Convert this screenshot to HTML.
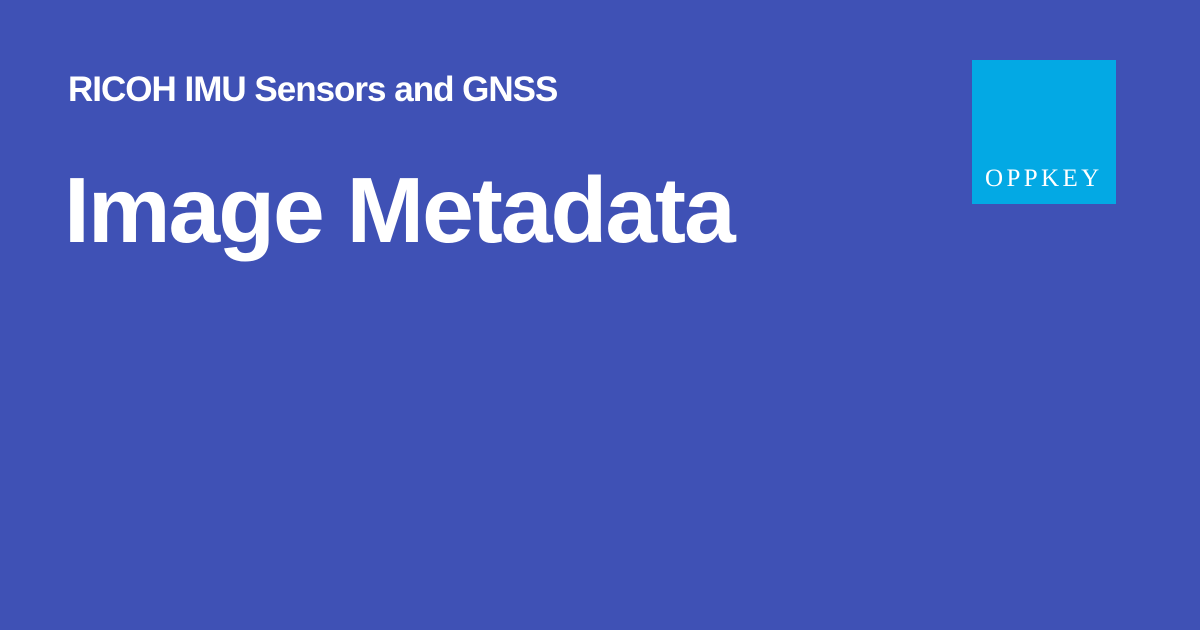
<!DOCTYPE html>
<html><head><style>
html,body{margin:0;padding:0;}
body{width:1200px;height:630px;background:#3f51b5;position:relative;overflow:hidden;font-family:"Liberation Sans",sans-serif;color:#fff;}
.sub{position:absolute;left:68px;top:72px;font-size:35px;line-height:1;font-weight:bold;white-space:nowrap;letter-spacing:-1px;}
.title{position:absolute;left:64px;top:164px;font-size:93px;line-height:1;font-weight:bold;white-space:nowrap;letter-spacing:-2px;}
.logo{position:absolute;left:972px;top:60px;width:144px;height:144px;background:#03a9e4;}
.lt{position:absolute;left:13px;top:106px;font-family:"Liberation Serif",serif;font-size:25px;line-height:1;letter-spacing:3.4px;white-space:nowrap;}
</style></head><body>
<div class="sub">RICOH IMU Sensors and GNSS</div>
<div class="title">Image Metadata</div>
<div class="logo"><div class="lt">OPPKEY</div></div>
</body></html>
